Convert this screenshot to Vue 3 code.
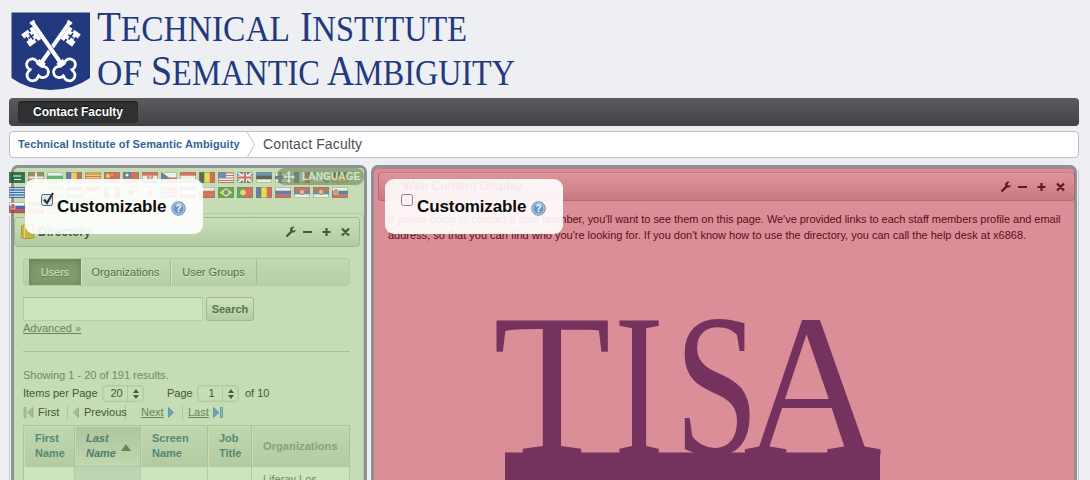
<script setup>
const flagRows = [
  [
    ['#16703a', 'ksa'], ['#c33', 'uk', '#1c8a3c'], ['h', '#fff', '#2c9a4a', '#2c9a4a'], ['v', '#27479c', '#f4cf2a', '#c9302c'],
    ['cat'], ['cn'], ['tw'], ['h', '#d33', '#fff', '#27479c', 'dot'], ['cz'], ['h', '#d33', '#fff', '#d33'],
    ['v', '#222', '#f7e017', '#dd2a2a'], ['us'], ['gb'], ['h', '#2d6fb8', '#222', '#fff'], ['fi'], ['v', '#27479c', '#fff', '#dd2a2a'],
    ['gal'], ['h', '#222', '#d22', '#f4cf2a'],
  ],
  [
    ['gr'], ['h', '#eee', '#b9c9ee', '#eee'], ['h', '#f29a3a', '#fff', '#2c9a4a'], ['h', '#d33', '#fff', '#2c9a4a'],
    ['h', '#d33', '#fff', '#fff'], ['v', '#2c9a4a', '#fff', '#d33'], ['jp'], ['jp'], ['no'], ['h', '#2c9a4a', '#fff', '#d33'],
    ['h', '#fff', '#d8322c', '#d8322c'], ['br'], ['pt'], ['v', '#27479c', '#f7e017', '#dd2a2a'], ['h', '#fff', '#2748b5', '#dd2a2a'],
    ['h', '#d8322c', '#1c6aa0', '#fff', 'dot'], ['h', '#d8322c', '#1c6aa0', '#fff', 'dot'], ['h', '#fff', '#27479c', '#d8322c', 'corner'],
  ],
  [['h', '#fff', '#2748b5', '#dd2a2a', 'corner'], ['h', '#d33', '#f4cf2a', '#d33'], ['h', '#2d6fb8', '#2d6fb8', '#f4cf2a']],
]
const headings = [
  { a: 'First', b: 'Name' }, { a: 'Last', b: 'Name', sorted: true }, { a: 'Screen', b: 'Name' },
  { a: 'Job', b: 'Title' }, { a: 'Organizations', muted: true },
]
const monogram = [
  { c: 'T', x: 493, w: 118 }, { c: 'I', x: 614, w: 50 }, { c: 'S', x: 674.6, w: 84.5 }, { c: 'A', x: 743, w: 139 },
]
</script>

<template>
  <div class="page">
    <header>
      <svg class="brand" width="520" height="98" viewBox="0 0 520 98">
        <path d="M11.500 12.500H90V78Q73 90 50.500 90T11.500 78Z" fill="#22387f" />
        <defs>
          <g id="key">
            <g fill="#fff">
              <path d="M-2.600-34h5.200v3h-.6V18h-4V-31h-.6Z" />
              <path fill-rule="evenodd" d="M-2-29h-4v3h-2v-3h-8v5h3v4h-3v6h8v-3h2v3h4ZM-9.800-25.500h1.600v3h2.400v1.600h-2.400v3h-1.600v-3h-2.400v-1.600h2.400Z" />
              <circle cx="-6.500" cy="23.500" r="7" /><circle cx="6.500" cy="23.500" r="7" /><circle cx="0" cy="32" r="7" />
              <path d="M-4 15h8v6h-8Z" />
            </g>
            <g fill="#22387f">
              <circle cx="-6.500" cy="23.500" r="4.200" /><circle cx="6.500" cy="23.500" r="4.200" /><circle cx="0" cy="32" r="4.200" />
              <path d="M-5 21H5L3.500 31h-7Z" />
            </g>
          </g>
        </defs>
        <use href="#key" transform="translate(51 49) scale(-1 1) rotate(-35)" />
        <path d="M37 29L60 62" stroke="#22387f" stroke-width="5.200" />
        <use href="#key" transform="translate(51 49) rotate(-35)" />
        <g class="small">
          <text x="97" y="40.500" textLength="193" lengthAdjust="spacingAndGlyphs"><tspan class="cap">T</tspan>ECHNICAL</text>
          <text x="300" y="40.500" textLength="167" lengthAdjust="spacingAndGlyphs"><tspan class="cap">I</tspan>NSTITUTE</text>
          <text x="97" y="84.500" textLength="45" lengthAdjust="spacingAndGlyphs">OF</text>
          <text x="151" y="84.500" textLength="169" lengthAdjust="spacingAndGlyphs"><tspan class="cap">S</tspan>EMANTIC</text>
          <text x="327" y="84.500" textLength="188" lengthAdjust="spacingAndGlyphs"><tspan class="cap">A</tspan>MBIGUITY</text>
        </g>
      </svg>
    </header>
    <nav class="nav"><a>Contact Faculty</a></nav>
    <div class="crumbs">
      <b>Technical Institute of Semantic Ambiguity</b>
      <svg width="10" height="26"><path d="M1 0L8.500 12.500L1 26" fill="none" stroke="#bfc2c6" /></svg>
      <span>Contact Faculty</span>
    </div>

    <main>
      <section class="col left">
        <div class="flags">
          <div v-for="(row, r) in flagRows" :key="r" class="frow">
            <svg v-for="(f, i) in row" :key="i" width="16" height="11" viewBox="0 0 16 11" :class="{ edge: i === 0 }">
              <template v-if="f[0] === 'h'">
                <rect width="16" height="4" :fill="f[1]" /><rect y="3.700" width="16" height="4" :fill="f[2]" /><rect y="7.400" width="16" height="3.600" :fill="f[3]" />
                <circle v-if="f[4] === 'dot'" cx="8" cy="5" r="2.500" fill="#e7b28a" stroke="#c33" />
                <rect v-if="f[4] === 'corner'" x="2" y="2" width="4" height="5" fill="#c9554f" stroke="#fff" stroke-width=".6" />
              </template>
              <template v-else-if="f[0] === 'v'">
                <rect width="6" height="11" :fill="f[1]" /><rect x="5.300" width="6" height="11" :fill="f[2]" /><rect x="10.700" width="5.300" height="11" :fill="f[3]" />
              </template>
              <template v-else-if="f[1] === 'ksa'"><rect width="16" height="11" fill="#0a5c35" /><path d="M4 4h8M5 7.500h7" stroke="#fff" /></template>
              <template v-else-if="f[1] === 'uk'"><rect width="16" height="11" fill="#d33" /><path d="M0 0L16 11M16 0L0 11" stroke="#1c8a3c" stroke-width="2" /><path d="M8 0V11M0 5.500H16" stroke="#fff" stroke-width="2" /></template>
              <template v-else-if="f[0] === 'cat'"><rect width="16" height="11" fill="#f6cf3a" /><path d="M0 2h16M0 4.500h16M0 7h16M0 9.500h16" stroke="#d8322c" /></template>
              <template v-else-if="f[0] === 'cn'"><rect width="16" height="11" fill="#d8322c" /><circle cx="4" cy="4" r="2" fill="#f6cf3a" /><circle cx="8" cy="3" r=".8" fill="#f6cf3a" /></template>
              <template v-else-if="f[0] === 'tw'"><rect width="16" height="11" fill="#d8322c" /><rect width="8" height="6" fill="#27479c" /><circle cx="4" cy="3" r="1.600" fill="#fff" /></template>
              <template v-else-if="f[0] === 'cz'"><rect width="16" height="11" fill="#d8322c" /><rect width="16" height="5.500" fill="#fff" /><path d="M0 0L8 5.500L0 11Z" fill="#27479c" /></template>
              <template v-else-if="f[0] === 'us'"><rect width="16" height="11" fill="#fff" /><path d="M0 1h16M0 3.500h16M0 6h16M0 8.500h16M0 10.500h16" stroke="#d8322c" stroke-width="1.200" /><rect width="8" height="6" fill="#3a62b0" /></template>
              <template v-else-if="f[0] === 'gb'"><rect width="16" height="11" fill="#27479c" /><path d="M0 0L16 11M16 0L0 11" stroke="#fff" stroke-width="2" /><path d="M8 0V11M0 5.500H16" stroke="#fff" stroke-width="4" /><path d="M8 0V11M0 5.500H16" stroke="#d8322c" stroke-width="2" /></template>
              <template v-else-if="f[0] === 'fi'"><rect width="16" height="11" fill="#fff" /><path d="M5 0V11M0 5.500H16" stroke="#27479c" stroke-width="3" /></template>
              <template v-else-if="f[0] === 'gal'"><rect width="16" height="11" fill="#fff" /><path d="M0 0L16 11" stroke="#2e9ac0" stroke-width="3.500" /></template>
              <template v-else-if="f[0] === 'gr'"><rect width="16" height="11" fill="#fff" /><path d="M0 .5h16M0 3h16M0 5.500h16M0 8h16M0 10.500h16" stroke="#1759b8" stroke-width="1.300" /></template>
              <template v-else-if="f[0] === 'jp'"><rect width="16" height="11" fill="#fff" /><circle cx="8" cy="5.500" r="3" fill="#d8322c" /></template>
              <template v-else-if="f[0] === 'no'"><rect width="16" height="11" fill="#d8322c" /><path d="M5 0V11M0 5.500H16" stroke="#fff" stroke-width="3" /><path d="M5 0V11M0 5.500H16" stroke="#27479c" /></template>
              <template v-else-if="f[0] === 'br'"><rect width="16" height="11" fill="#1c8a2c" /><path d="M8 1L14.500 5.500L8 10L1.500 5.500Z" fill="#f4e52a" /><circle cx="8" cy="5.500" r="2.400" fill="#3a62b0" /></template>
              <template v-else-if="f[0] === 'pt'"><rect width="16" height="11" fill="#d8322c" /><rect width="6" height="11" fill="#1c8a2c" /><circle cx="6" cy="5.500" r="2.500" fill="#e7d28a" stroke="#f4cf2a" /></template>
              <rect x=".5" y=".5" width="15" height="10" fill="none" stroke="#5b4a32" stroke-opacity=".45" />
            </svg>
          </div>
        </div>
        <div class="lang">
          <svg width="12" height="12" viewBox="0 0 12 12"><path d="M6 0l2.300 2.500H6.800v2.700h2.700V3.700L12 6 9.500 8.300V6.800H6.800v2.700h1.500L6 12 3.700 9.500h1.500V6.800H2.500v1.500L0 6l2.500-2.300v1.500h2.700V2.500H3.700Z" fill="#dbe8d0" /></svg>
          LANGUAGE
        </div>
        <div class="portlet">
          <div class="bar">
            <svg class="book" width="14" height="16"><rect x=".5" y="1" width="12.500" height="13.500" rx="2" fill="#c9b443" stroke="#a69a3c" /><path d="M3.500 1v13" stroke="#e3d67c" /><rect x="8" y="1" width="3" height="7" fill="#f1e9b0" /></svg>
            <b>Directory</b>
            <svg class="tools" width="66" height="12" viewBox="0 0 66 12"><g id="tools"><path d="M1.500 10.500L7 5" stroke="currentColor" stroke-width="2.400" fill="none" /><path d="M9.500 1A3 3 0 1 0 11 4L8.700 4.700L7.200 3.300Z" fill="currentColor" /><path d="M18 6h9M37.500 6h8M41.500 2v8M57 2.500l7 7M64 2.500l-7 7" stroke="currentColor" stroke-width="2.200" fill="none" /></g></svg>
          </div>
          <div class="body">
            <div class="tabs"><span class="on">Users</span><span>Organizations</span><span class="ug">User Groups</span></div>
            <div class="search"><div class="input"></div><div class="btn">Search</div></div>
            <div class="adv"><u>Advanced »</u></div>
            <div class="results">Showing 1 - 20 of 191 results.</div>
            <div class="pager">
              <span class="ipp">Items per Page</span>
              <div class="select"><span>20</span><svg width="7" height="10"><path d="M0 4L3 0L6 4ZM0 6h6L3 10Z" fill="#45603a" /></svg></div>
              <span class="pg">Page</span>
              <div class="select"><span>1</span><svg width="7" height="10"><path d="M0 4L3 0L6 4ZM0 6h6L3 10Z" fill="#45603a" /></svg></div>
              <span class="of">of 10</span>
            </div>
            <div class="links">
              <span class="l1"><svg width="11" height="12"><path d="M1 .5h2v10H1Z" fill="#afc4a0" stroke="#8da37d" stroke-width=".7" /><path d="M10 .5v10L4.500 5.500Z" fill="#a5bb96" stroke="#8da37d" stroke-width=".7" /></svg>First</span>
              <span class="l2"><svg width="6" height="12"><path d="M5.500 .5v10L.5 5.500Z" fill="#a5bb96" stroke="#8da37d" stroke-width=".7" /></svg>Previous</span>
              <span class="l3"><u>Next</u><svg width="6" height="12"><path d="M.5 .5v10L5.500 5.500Z" fill="#70a6ae" stroke="#568e9f" stroke-width=".8" /></svg></span>
              <span class="l4"><u>Last</u><svg width="11" height="12"><path d="M.5 .5v10L6 5.500Z" fill="#70a6ae" stroke="#568e9f" stroke-width=".8" /><path d="M7.500 .5h2v10h-2Z" fill="#8dbdbd" stroke="#568e9f" stroke-width=".8" /></svg></span>
            </div>
            <div class="grid">
              <div v-for="(h, i) in headings" :key="i" class="th" :class="{ sorted: h.sorted, muted: h.muted }">
                <span>{{ h.a }}<template v-if="h.b"><br>{{ h.b }}</template></span>
                <i v-if="h.sorted" class="up"></i>
              </div>
              <div class="td"></div><div class="td dark"></div><div class="td"></div><div class="td"></div><div class="td">Liferay Los</div>
            </div>
          </div>
        </div>
        <div class="pop">
          <svg class="box" width="16" height="16"><rect x="1.500" y="3.500" width="11" height="11" rx="2" fill="#dfe6ec" stroke="#59636e" /><path d="M4 8.500L7 12L13 2" fill="none" stroke="#263442" stroke-width="2.200" /></svg>
          <b>Customizable</b>
          <svg class="help" width="15" height="15"><circle cx="7.500" cy="7.500" r="6.800" fill="#6c95c2" stroke="#7594b6" /><circle cx="7.500" cy="7.500" r="5.600" fill="none" stroke="#cfe0ef" /><text x="7.500" y="11" text-anchor="middle">?</text></svg>
        </div>
      </section>

      <section class="col right">
        <div class="rbar">
          <svg class="doc" width="12" height="13"><path d="M0 2h5v5H0ZM6.500 2h5M6.500 4.500h5M6.500 7h5M1 9.500h10.500M1 12h10.500" fill="#7e8a80" stroke="#94777b" /></svg>
          <b>Web Content Display</b>
          <svg class="tools" width="66" height="12" viewBox="0 0 66 12"><use href="#tools" /></svg>
        </div>
        <p><span class="tight">If you're going to contact a staff member, you'll want to see them on this page. We've provided links to each staff members profile and email</span><br>address, so that you can find who you're looking for. If you don't know how to use the directory, you can call the help desk at x6868.</p>
        <svg class="tisa" width="400" height="180" viewBox="490 300 400 180">
          <text v-for="m in monogram" :key="m.c" :x="m.x" y="454" :textLength="m.w" lengthAdjust="spacingAndGlyphs">{{ m.c }}</text>
          <rect x="505" y="452.500" width="375" height="30" />
        </svg>
        <div class="pop">
          <svg class="box" width="16" height="16"><rect x="1.500" y="3.500" width="11" height="11" rx="2" fill="#f8f0f2" stroke="#8d8588" /></svg>
          <b>Customizable</b>
          <svg class="help" width="15" height="15"><circle cx="7.500" cy="7.500" r="6.800" fill="#6c95c2" stroke="#7594b6" /><circle cx="7.500" cy="7.500" r="5.600" fill="none" stroke="#cfe0ef" /><text x="7.500" y="11" text-anchor="middle">?</text></svg>
        </div>
      </section>
    </main>
  </div>
</template>

<style>
body { background: #eeeff2; overflow: hidden; }
</style>
<style scoped>
* { box-sizing: border-box; }
.page { height: 480px; overflow: hidden; padding: 0 11px 0 9px; font: 11px/15px "Liberation Sans", Arial, sans-serif; background: #eeeff2; display: flex; flex-direction: column; }
svg { display: block; flex: none; }
header { height: 98px; flex: none; }
.brand { margin-left: -9px; overflow: visible; }
.small { font: 36px "Liberation Serif", serif; fill: #22387f; }
.cap { font-size: 42px; }
.nav { height: 28px; flex: none; border-radius: 4px; background: linear-gradient(#5b5c5e, #414244); padding: 3px 9px; display: flex; }
.nav a { width: 120px; height: 22px; border-radius: 4px; background: #303132; box-shadow: inset 0 1px 2px #1c1c1d; color: #fff; font-weight: bold; font-size: 12px; line-height: 22px; text-align: center; white-space: nowrap; text-shadow: 0 -1px 1px #000; }
.crumbs { height: 27px; flex: none; margin-top: 5px; border: 1px solid #bfc1c5; border-radius: 4px; background: #fff; display: flex; align-items: center; padding-left: 8px; white-space: nowrap; }
.crumbs b { width: 228px; color: #32649c; letter-spacing: .1px; }
.crumbs svg { margin-right: 7px; }
.crumbs span { font-size: 14px; letter-spacing: .13px; color: #4c505c; }
main { height: 330px; flex: none; margin-top: 7px; padding: 0 2px; display: flex; gap: 4px; position: relative; }
.col { position: relative; border: 3px solid #8e9092; border-bottom: 0; height: 330px; border-radius: 7px 7px 0 0; flex: none; }
.left { width: 356px; background: #c6dcb5; }
.left::before { content: ""; position: absolute; left: -5px; top: 48px; bottom: 0; width: 1px; background: #c6c8ca; }
.right { width: 706px; background: #db8e97; padding: 4px 0 0 4px; box-shadow: inset 0 1px #c77983; }
.right::after { content: ""; position: absolute; right: -5px; top: 2px; bottom: 0; width: 1px; background: #c6c8ca; }
.flags { height: 45px; padding-top: 4px; margin-left: -5px; display: flex; flex-direction: column; gap: 4px; }
.frow { display: flex; gap: 3px; }
.frow svg { opacity: .62; }
.frow .edge { opacity: .8; }
.lang { position: absolute; right: 0; top: 0; width: 87px; height: 17px; border-radius: 8px; background: rgba(111, 137, 95, .62); display: flex; align-items: center; gap: 7px; padding-left: 6px; font-weight: bold; font-size: 10px; letter-spacing: .15px; color: #d5e5c8; }
.portlet { border-top: 1px solid #b3c9a2; border-right: 1px solid #b3c9a2; height: 300px; margin-left: 0; border-radius: 0 4px 0 0; }
.bar { margin: 3px 4px 0 0; width: 346px; height: 30px; border: 1px solid #a1b790; border-radius: 4px; background: linear-gradient(#c9dfb8, #b4caa3); display: flex; align-items: center; padding-left: 6px; color: #435d34; font-size: 12px; }
.bar b { margin-left: 3px; }
.tools { margin-left: auto; color: #435d34; margin-right: 8px; }
.body { padding: 11px 0 0 9px; width: 336px; }
.tabs { height: 28px; border: 1px solid #b3c9a2; border-radius: 4px; background: linear-gradient(#c2d8b1, #b9cfa8); display: flex; padding-left: 5px; line-height: 26px; color: #526f43; text-align: center; }
.tabs span { width: 90px; border-right: 1px solid #a5bc94; box-shadow: inset 1px 0 #cfe4bf; text-shadow: 0 1px #d5e8c6; }
.tabs .on { width: 52px; border: 0; background: #7f9b6e; box-shadow: inset 0 2px 7px #667f57; color: #d2e5c3; text-shadow: 0 1px #657e56; }
.tabs .ug { width: 86px; }
.search { display: flex; gap: 3px; margin-top: 11px; }
.input { width: 180px; height: 24px; border: 1px solid #b6cca5; border-top-color: #a5bd95; background: #cee4bd; }
.btn { width: 48px; height: 24px; border: 1px solid #9fb58e; border-radius: 3px; background: linear-gradient(#cde2bd, #b6cca5); font-weight: bold; color: #55764f; line-height: 23px; text-align: center; }
.adv { color: #638663; height: 31px; border-bottom: 1px solid #a8bf97; }
.results { color: #6e8b5f; margin-top: 16px; }
.pager { display: flex; align-items: center; height: 17px; margin-top: 2px; color: #405a33; white-space: nowrap; }
.ipp { width: 79px; }
.select { width: 42px; height: 17px; border: 1px solid #b2c8a1; border-radius: 4px; background: #c7ddb6; box-shadow: inset 0 0 2px #a7bf96; display: flex; align-items: center; }
.select span { width: 25px; height: 15px; border-right: 1px solid #b2c8a1; text-align: center; padding-left: 3px; }
.select svg { margin-left: 5px; }
.pg { width: 53px; padding-left: 23px; }
.of { margin-left: 6px; }
.links { display: flex; align-items: center; height: 21px; color: #405a33; white-space: nowrap; }
.links span { display: flex; align-items: center; height: 15px; }
.links u { color: #638663; }
.l1 { width: 45px; border-right: 1px solid #afc59e; gap: 4px; }
.l2 { width: 58px; border-right: 1px solid #afc59e; padding-left: 5px; gap: 5px; }
.l3 { width: 56px; border-right: 0; padding-left: 15px; gap: 4px; }
.l4 { border-left: 1px solid #afc59e; padding-left: 5px; gap: 4px; }
.grid { margin-top: 2px; display: grid; grid-template-columns: 51px 66px 67px 44px 98px; width: 327px; border: 1px solid #aec49d; border-right-width: 0; }
.th { height: 41px; padding-left: 11px; border-right: 1px solid #aac199; border-bottom: 1px solid #b3c9a2; box-shadow: inset 1px 1px #c6dcb5; background: linear-gradient(#c1d7b0, #b4caa3); display: flex; align-items: center; font-weight: bold; color: #558875; }
.th.sorted { font-style: italic; color: #517e70; background: linear-gradient(#aec49d, #c1d7b0); }
.up { border: 5px solid transparent; border-top: 0; border-bottom: 7px solid #68845a; margin-left: 5px; margin-top: 2px; }
.th.muted { color: #87a179; padding-left: 11px; letter-spacing: .1px; }
.td { height: 40px; background: #cee4bd; border-right: 1px solid #b3c9a2; padding: 5px 0 0 11px; color: #6e8b5f; }
.td.dark { background: #bdd5b2; }
.pop { position: absolute; left: 11px; top: 11px; width: 178px; height: 55px; border-radius: 9px; background: rgba(255, 255, 255, .9); display: flex; align-items: center; padding-left: 15px; }
.pop b { font-size: 17px; letter-spacing: -.1px; margin-left: 1px; color: #0b0b0b; width: 114px; line-height: 20px; }
.box { margin-top: -15px; }
.help { margin-top: 3px; }
.help text { font: bold 10px "Liberation Sans", sans-serif; fill: #fff; }
.rbar { width: 697px; height: 29px; border: 1px solid #b9656f; border-top-color: #c77983; border-radius: 4px; background: linear-gradient(#df959d, #c97982); display: flex; align-items: center; padding-left: 9px; color: #7d2530; font-size: 12px; }
.rbar b { margin-left: 3px; }
.rbar .tools { color: #641621; margin-right: 8px; }
p { margin: 11px 0 0 10px; color: #5d0d19; line-height: 15.500px; white-space: nowrap; }
.tight { letter-spacing: -.037px; }
.tisa { margin: 57px 0 0 112px; fill: #75325e; font: 204px "Liberation Serif", serif; overflow: visible; }
</style>
